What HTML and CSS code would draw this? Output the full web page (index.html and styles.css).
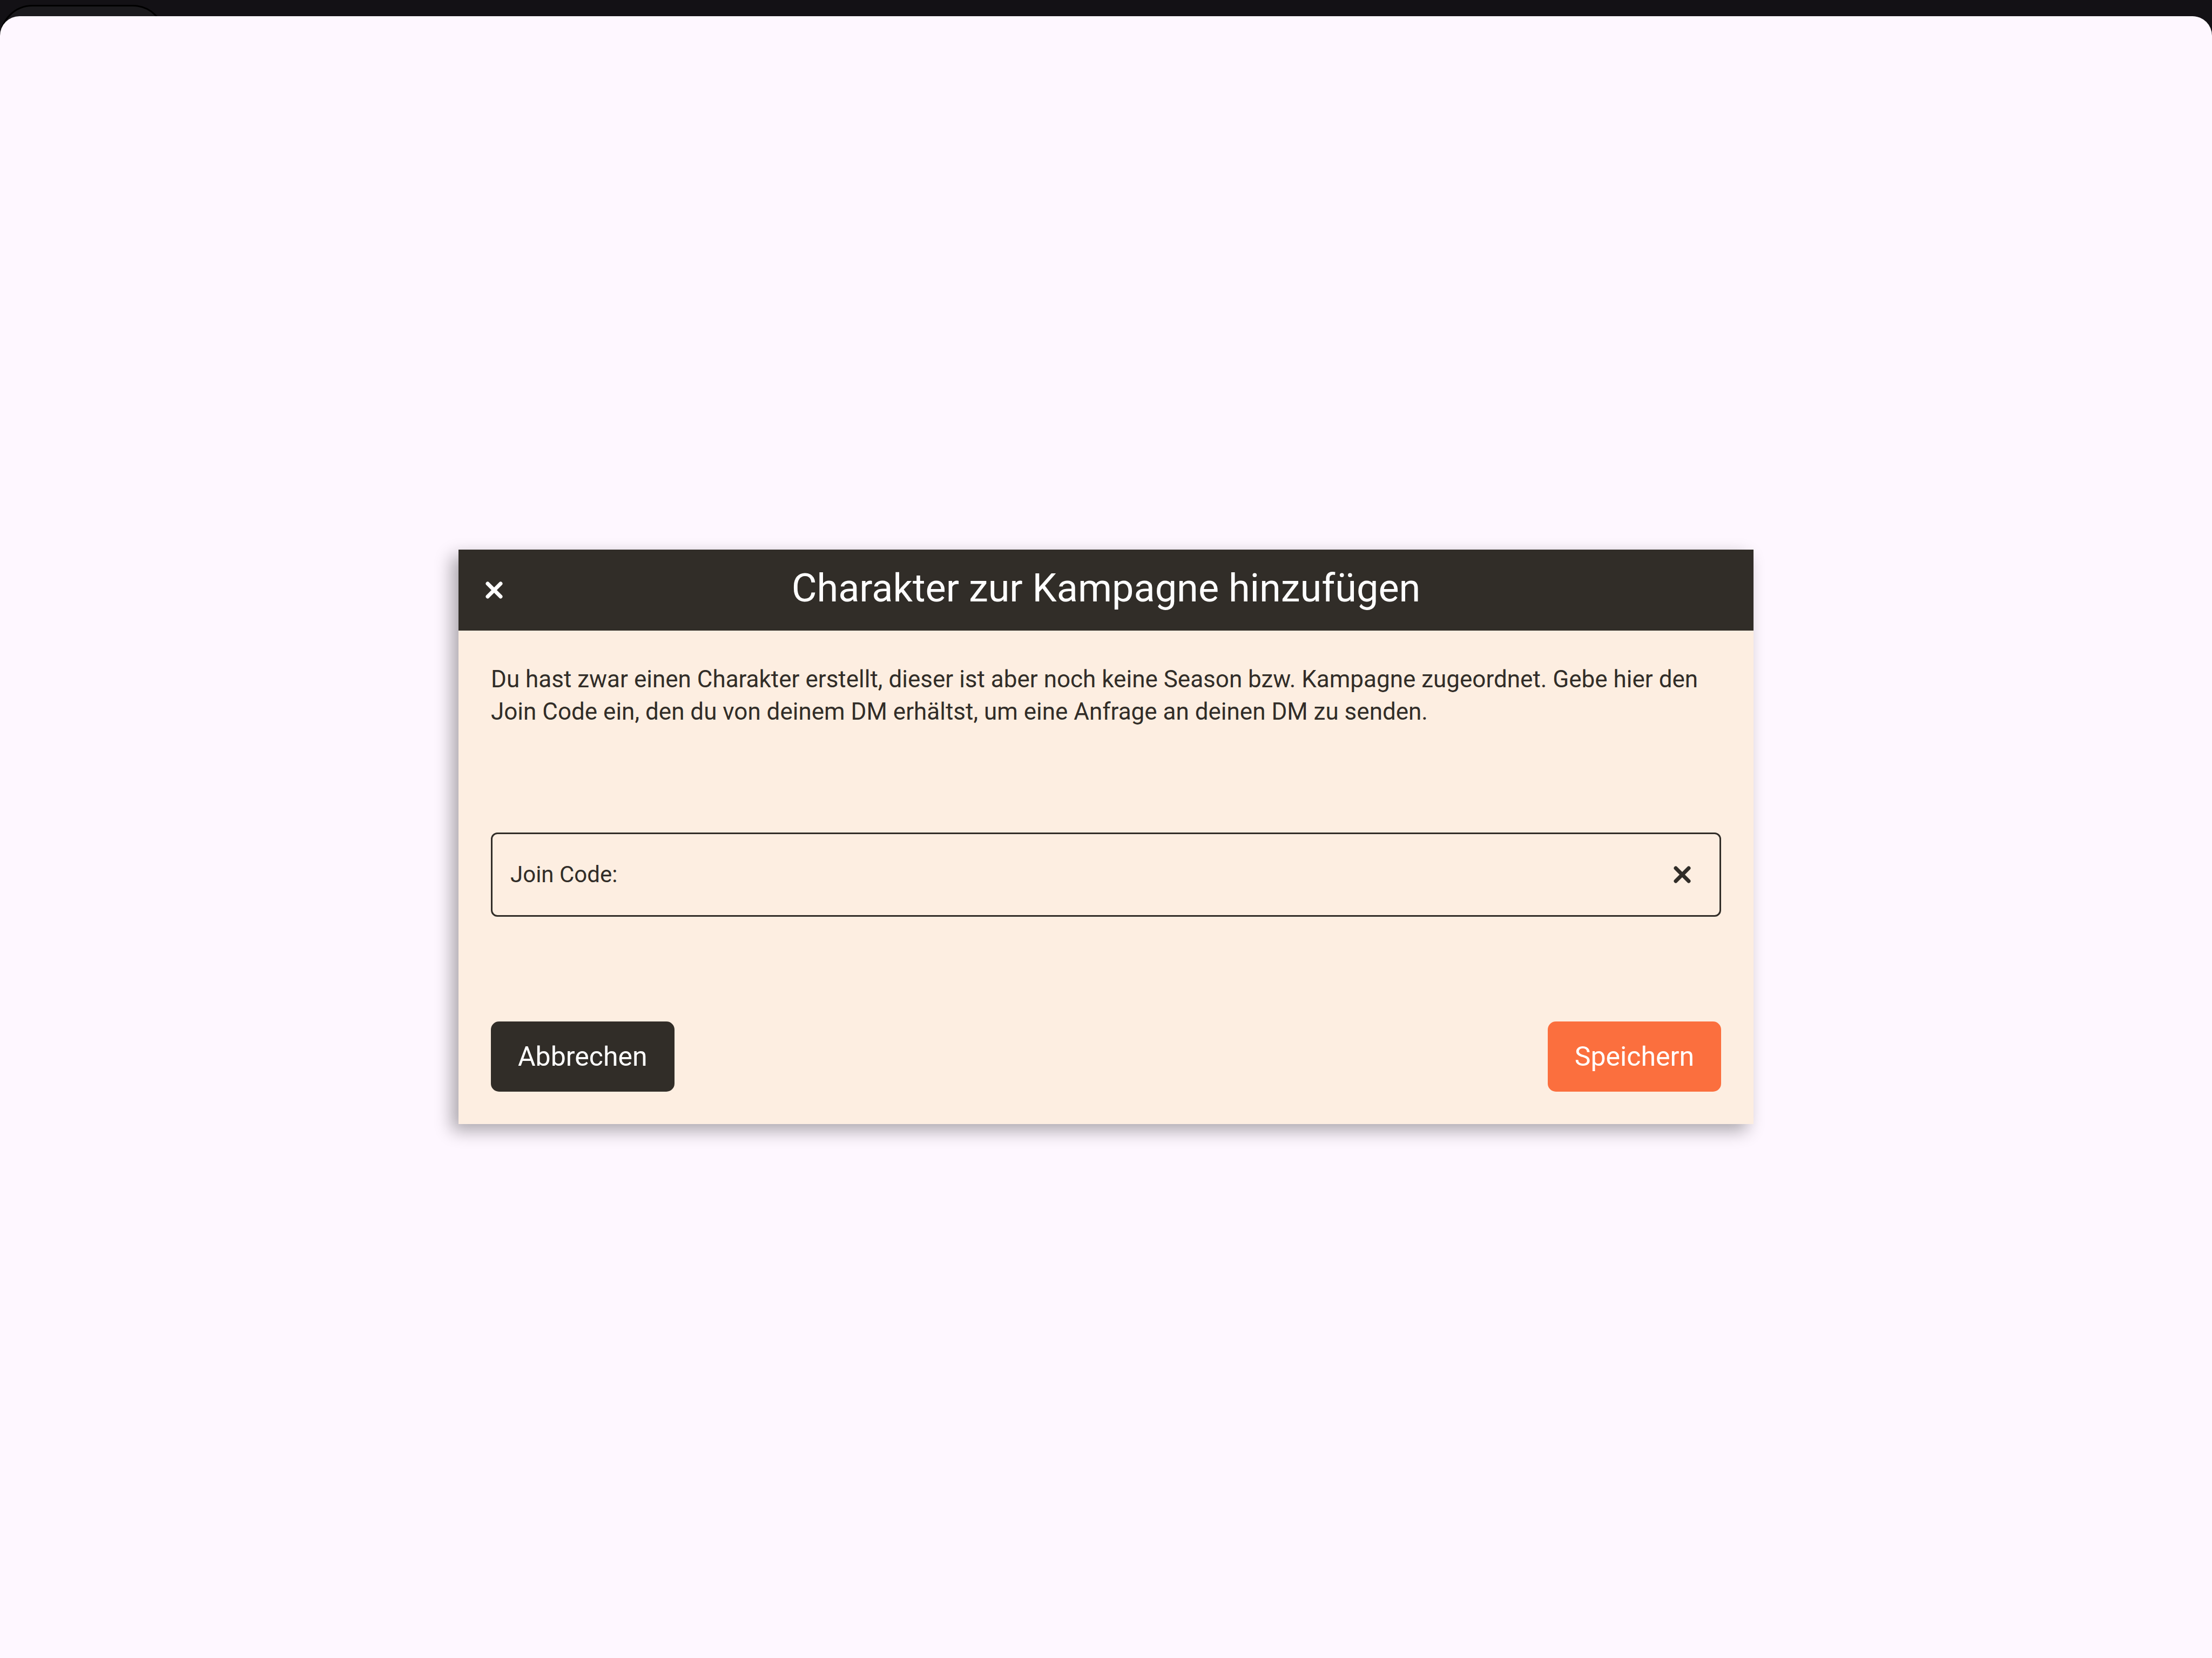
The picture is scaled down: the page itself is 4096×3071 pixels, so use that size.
FILE: index.html
```html
<!DOCTYPE html>
<html lang="de">
<head>
<meta charset="utf-8">
<title>Charakter zur Kampagne hinzufügen</title>
<link rel="stylesheet" href="styles.css">
</head>
<body>
<div class="backdrop"><div class="backdrop-pill"></div></div>
<main class="sheet">
  <section class="dialog" role="dialog" aria-labelledby="dialog-title">
    <header class="dialog-header">
      <button class="icon-button" type="button" aria-label="Schließen">
        <svg class="icon" viewBox="0 0 32 32" aria-hidden="true"><path d="M4 4 28 28M28 4 4 28"/></svg>
      </button>
      <h1 class="dialog-title" id="dialog-title">Charakter zur Kampagne hinzufügen</h1>
    </header>
    <form class="dialog-body">
      <p class="message">Du hast zwar einen Charakter erstellt, dieser ist aber noch keine Season bzw. Kampagne zugeordnet. Gebe hier den Join Code ein, den du von deinem DM erhältst, um eine Anfrage an deinen DM zu senden.</p>
      <div class="field">
        <label class="field-label" for="join-code">Join Code:</label>
        <input class="field-input" id="join-code" type="text">
        <button class="icon-button" type="button" aria-label="Eingabe löschen">
          <svg class="icon" viewBox="0 0 32 32" aria-hidden="true"><path d="M4 4 28 28M28 4 4 28"/></svg>
        </button>
      </div>
      <div class="actions">
        <button class="button button-dark" type="button">Abbrechen</button>
        <button class="button button-accent" type="submit">Speichern</button>
      </div>
    </form>
  </section>
</main>
</body>
</html>
```
FILE: styles.css
```css
:root {
  --ink: #312d28;
  --cream: #fdeee1;
  --accent: #fb6f3e;
  --sheet: #fef7ff;
}

* {
  box-sizing: border-box;
}

body {
  display: flex;
  flex-direction: column;
  min-height: 100vh;
  margin: 0;
  overflow: hidden;
  background: #131115;
  color: var(--ink);
  font-family: Roboto, "Liberation Sans", sans-serif;
}

.backdrop {
  height: 30px;
  padding-top: 9px;
}

.backdrop-pill {
  width: 306px;
  height: 120px;
  border: 3px solid #000;
  border-radius: 60px;
  background: #1b1a1d;
}

.sheet {
  position: relative;
  display: flex;
  flex: 1;
  align-items: center;
  justify-content: center;
  padding-bottom: 1px;
  border-radius: 36px 36px 0 0;
  background: var(--sheet);
}

.dialog {
  width: 100%;
  max-width: 2398px;
  background: var(--cream);
  box-shadow: -12px 12px 30px rgba(0, 0, 0, 0.33);
}

.dialog-header {
  display: grid;
  grid-template-columns: 32px 1fr 32px;
  align-items: center;
  height: 150px;
  padding: 0 50px;
  background: var(--ink);
  color: #fff;
}

.dialog-title {
  margin: 0;
  padding-bottom: 6px;
  font-size: 72px;
  font-weight: 400;
  line-height: 96px;
  text-align: center;
}

.icon-button {
  display: flex;
  padding: 0;
  border: 0;
  background: none;
  color: inherit;
}

.icon {
  width: 32px;
  height: 32px;
  fill: none;
  stroke: currentColor;
  stroke-width: 7;
  stroke-linecap: round;
}

.dialog-body {
  display: flex;
  flex-direction: column;
  gap: 194px;
  padding: 60px;
}

.message {
  margin: 0;
  font-size: 44px;
  line-height: 60px;
}

.field {
  display: flex;
  align-items: center;
  height: 156px;
  padding: 0 53px 0 33px;
  border: 3px solid var(--ink);
  border-radius: 12px;
}

.field-label {
  font-size: 42px;
  line-height: 60px;
}

.field-input {
  flex: 1;
  height: 120px;
  border: 0;
  outline: 0;
  background: none;
  color: inherit;
  font: inherit;
  font-size: 42px;
}

.actions {
  display: flex;
  justify-content: space-between;
}

.button {
  height: 130px;
  padding: 0 50px;
  border: 0;
  border-radius: 15px;
  color: #fff;
  font-family: inherit;
  font-size: 50px;
  font-weight: 400;
}

.button-dark {
  background: var(--ink);
}

.button-accent {
  background: var(--accent);
}
```
